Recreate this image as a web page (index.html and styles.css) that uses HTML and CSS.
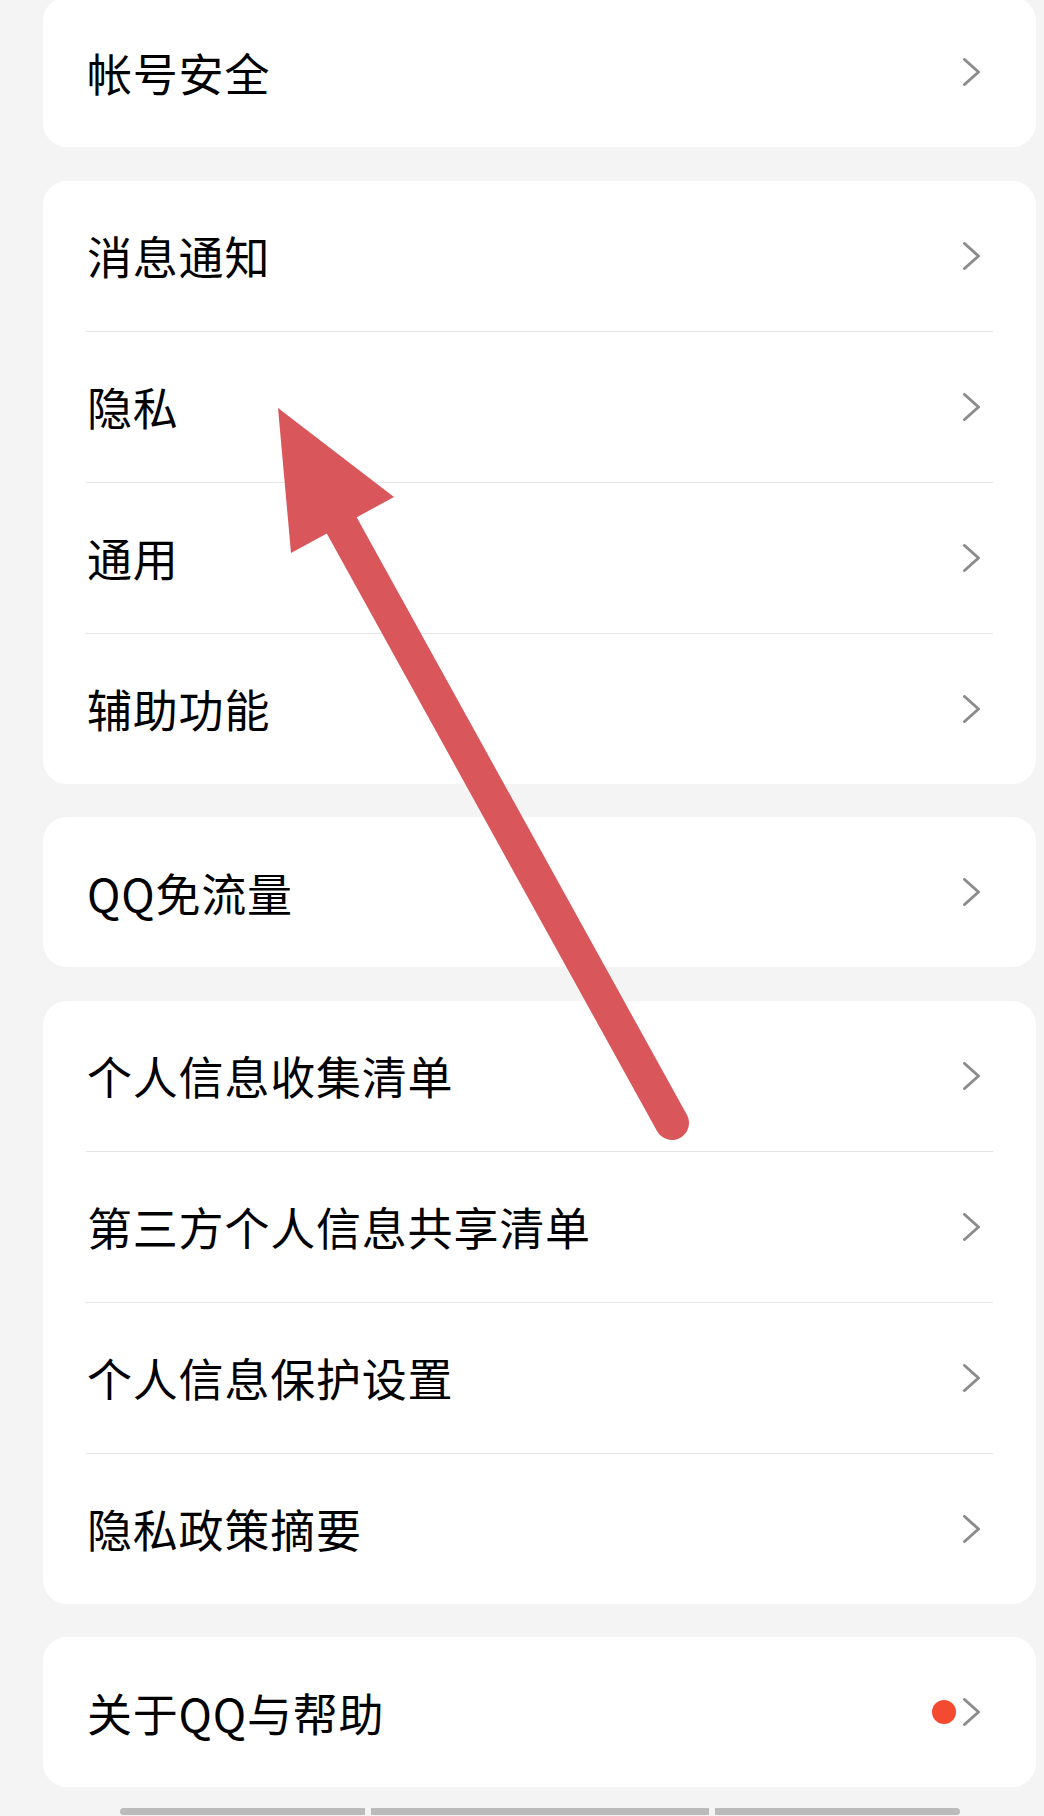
FILE: index.html
```html
<!DOCTYPE html>
<html lang="zh-CN">
<head>
<meta charset="utf-8">
<title>设置</title>
<link rel="stylesheet" href="styles.css">
</head>
<body>
<div class="page">
  <div class="list">
    <section class="card">
      <div class="row"><span class="label">帐号安全</span><svg class="chev" viewBox="0 0 20 28"><polyline points="2.5,1.5 16.5,14 2.5,26.5"/></svg></div>
    </section>
    <section class="card">
      <div class="row"><span class="label">消息通知</span><svg class="chev" viewBox="0 0 20 28"><polyline points="2.5,1.5 16.5,14 2.5,26.5"/></svg></div>
      <div class="divider"></div>
      <div class="row"><span class="label">隐私</span><svg class="chev" viewBox="0 0 20 28"><polyline points="2.5,1.5 16.5,14 2.5,26.5"/></svg></div>
      <div class="divider"></div>
      <div class="row"><span class="label">通用</span><svg class="chev" viewBox="0 0 20 28"><polyline points="2.5,1.5 16.5,14 2.5,26.5"/></svg></div>
      <div class="divider"></div>
      <div class="row"><span class="label">辅助功能</span><svg class="chev" viewBox="0 0 20 28"><polyline points="2.5,1.5 16.5,14 2.5,26.5"/></svg></div>
    </section>
    <section class="card">
      <div class="row"><span class="label">QQ免流量</span><svg class="chev" viewBox="0 0 20 28"><polyline points="2.5,1.5 16.5,14 2.5,26.5"/></svg></div>
    </section>
    <section class="card">
      <div class="row"><span class="label">个人信息收集清单</span><svg class="chev" viewBox="0 0 20 28"><polyline points="2.5,1.5 16.5,14 2.5,26.5"/></svg></div>
      <div class="divider"></div>
      <div class="row"><span class="label">第三方个人信息共享清单</span><svg class="chev" viewBox="0 0 20 28"><polyline points="2.5,1.5 16.5,14 2.5,26.5"/></svg></div>
      <div class="divider"></div>
      <div class="row"><span class="label">个人信息保护设置</span><svg class="chev" viewBox="0 0 20 28"><polyline points="2.5,1.5 16.5,14 2.5,26.5"/></svg></div>
      <div class="divider"></div>
      <div class="row"><span class="label">隐私政策摘要</span><svg class="chev" viewBox="0 0 20 28"><polyline points="2.5,1.5 16.5,14 2.5,26.5"/></svg></div>
    </section>
    <section class="card">
      <div class="row"><span class="label">关于QQ与帮助</span><span class="trail"><span class="dot"></span><svg class="chev" viewBox="0 0 20 28"><polyline points="2.5,1.5 16.5,14 2.5,26.5"/></svg></span></div>
    </section>
  </div>
  <div class="bars">
    <span class="bar bar-a"></span>
    <span class="bar bar-b"></span>
    <span class="bar bar-c"></span>
  </div>
</div>
<svg class="arrow" viewBox="0 0 1044 1816" width="1044" height="1816">
  <line x1="336" y1="515" x2="672" y2="1123" stroke="#d9565b" stroke-width="34" stroke-linecap="round"/>
  <polygon points="278,408 394,497 291,553" fill="#d9565b"/>
</svg>
</body>
</html>
```
FILE: styles.css
```css
html, body {
  margin: 0;
  padding: 0;
}
body {
  background: #f4f4f4;
  width: 1044px;
  height: 1816px;
  overflow: hidden;
  position: relative;
  font-family: "Noto Sans CJK SC", "Noto Sans", sans-serif;
  color: #000;
}
.page {
  padding: 0 8px 0 43px;
}
.list {
  display: flex;
  flex-direction: column;
  gap: 33.5px;
  margin-top: -3px;
}
.card {
  background: #fff;
  border-radius: 24px;
}
.row {
  height: 150px;
  display: flex;
  align-items: center;
  justify-content: space-between;
  padding: 0 54px 0 44px;
}
.label {
  font-size: 45px;
  line-height: 1;
  letter-spacing: 0.8px;
}
.chev {
  width: 20px;
  height: 28px;
  display: block;
}
.chev polyline {
  fill: none;
  stroke: #8c8c8c;
  stroke-width: 3;
  stroke-linecap: round;
  stroke-linejoin: round;
}
.trail {
  display: flex;
  align-items: center;
  gap: 6px;
}
.dot {
  width: 24px;
  height: 24px;
  border-radius: 50%;
  background: #f44b30;
}
.divider {
  height: 1px;
  background: #e6e6e6;
  margin: 0 43px;
}
.bars {
  display: flex;
  gap: 6px;
  margin: 21px 0 0 77px;
}
.bar {
  height: 7px;
  background: #bbbbbb;
}
.bar-a {
  width: 245px;
  border-radius: 4px 0 0 4px;
}
.bar-b {
  width: 338px;
}
.bar-c {
  width: 245px;
  border-radius: 0 4px 4px 0;
}
.arrow {
  position: absolute;
  left: 0;
  top: 0;
  pointer-events: none;
}
```
